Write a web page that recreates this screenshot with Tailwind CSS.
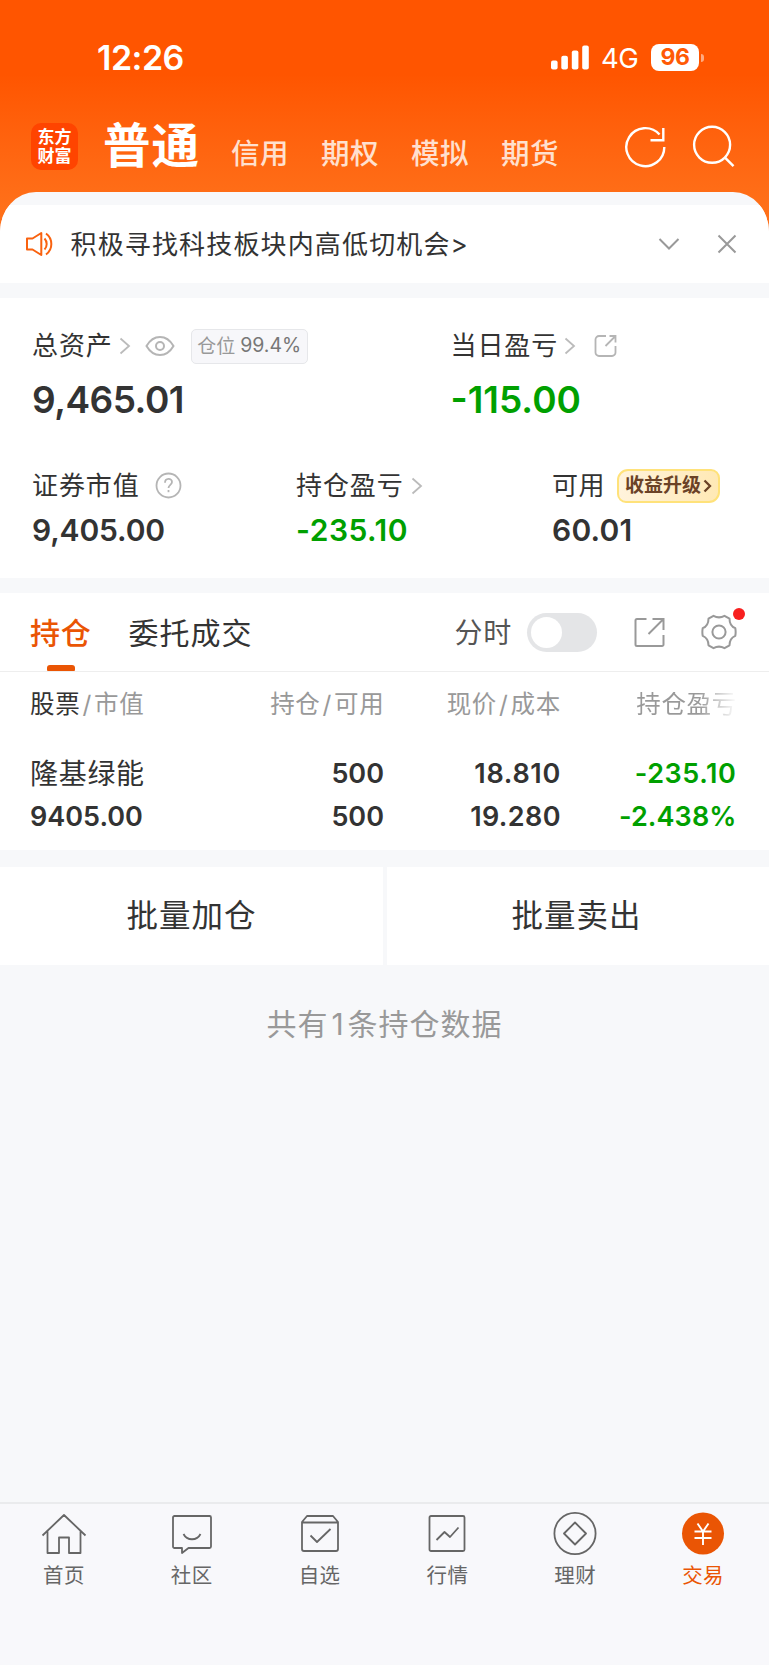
<!DOCTYPE html>
<html lang="zh-CN">
<head>
    <meta charset="UTF-8">
    <meta name="viewport" content="width=device-width, initial-scale=1.0">
    <title>交易</title>
    <script src="https://cdn.jsdelivr.net/npm/@tailwindcss/browser@4"></script>
</head>
<body class="font-['Inter','Noto_Sans_CJK_SC',sans-serif] text-[#333] bg-[#f7f8fa]">
<div class="flex flex-col w-[769px] h-[1665px] overflow-hidden leading-none whitespace-nowrap">
    <!-- header -->
    <header class="h-[232px] shrink-0 bg-linear-to-b from-[#ff5500] from-32% to-[#ff7019] to-90% text-white">
        <div class="flex items-center h-[115px] pl-[97px] pr-[65px]">
            <p class="text-[34px] font-semibold tracking-[-0.5px] mt-px">12:26</p>
            <svg class="ml-auto" width="38" height="25" viewBox="0 0 38 25" fill="#fff">
                <rect x="0" y="15.5" width="6.6" height="9" rx="2"/>
                <rect x="10.3" y="10.8" width="6.6" height="13.7" rx="2"/>
                <rect x="20.8" y="5.6" width="6.6" height="18.9" rx="2"/>
                <rect x="31.2" y="0.5" width="6.6" height="24" rx="2"/>
            </svg>
            <p class="ml-3 w-[38px] text-[27.5px] tracking-[-0.6px] mt-0.5">4G</p>
            <div class="ml-[12px] flex items-center justify-center w-[48px] h-[27px] rounded-[8px] bg-white text-[#ff5a05] text-[23px] font-bold tracking-[-0.5px]">96</div>
            <div class="ml-[2px] w-[3px] h-[8px] rounded-r-full bg-white/50"></div>
        </div>
        <div class="flex h-[77px] pl-[31px]">
            <div class="mt-2 w-[47px] h-[47px] rounded-[10px] bg-[#ff4400] flex flex-col items-center justify-center gap-[2px] text-[17px] font-bold">
                <p>东方</p>
                <p>财富</p>
            </div>
            <p class="ml-[25px] mt-[7px] w-[98px] text-[47.5px] font-bold tracking-[1px]">普通</p>
            <div class="flex ml-[30px] mt-[25px] text-[28.5px] font-medium tracking-[0.5px] text-[#ffe0cf]">
                <p class="w-[90px]">信用</p>
                <p class="w-[90px]">期权</p>
                <p class="w-[90px]">模拟</p>
                <p class="w-[90px]">期货</p>
            </div>
            <svg class="ml-[32px] mt-[9px]" width="44" height="46" viewBox="0 0 44 46" fill="none" stroke="#fff" stroke-width="2.4">
                <path d="M41.300 23A19 19 0 1 1 36.500 10.500"/>
                <path d="M40.300 4v12.300H27.500"/>
            </svg>
            <svg class="ml-[24px] mt-[9px]" width="44" height="46" viewBox="0 0 44 46" fill="none" stroke="#fff" stroke-width="2.4">
                <circle cx="21.1" cy="20.8" r="18"/>
                <path d="M33.5 33.2l9 9"/>
            </svg>
        </div>
    </header>

    <!-- notice -->
    <section class="relative -mt-10 shrink-0 h-[91px] rounded-t-[36px_40px] pt-[13px] bg-[#f7f8fa] overflow-hidden">
        <div class="h-[78px] bg-white flex items-center">
            <svg class="ml-[25px]" width="29" height="26" viewBox="0 0 29 26" fill="none" stroke="#f9620f" stroke-width="2">
                <path d="M2 7.5h5.500L16.300 2v22L7.500 18.500H2z" stroke-linejoin="round"/>
                <path d="M19.500 7.500a8 8 0 0 1 0 11M21 2.500a13 13 0 0 1 0 21"/>
            </svg>
            <p class="ml-[16.500px] mt-px text-[26px] tracking-[1.150px]">积极寻找科技板块内高低切机会&gt;</p>
            <svg class="ml-auto" width="22" height="14" viewBox="0 0 22 14" fill="none" stroke="#999" stroke-width="2"><path d="M1.500 2l9.500 9.500L20.500 2"/></svg>
            <svg class="ml-[37px] mr-[32px]" width="20" height="20" viewBox="0 0 20 20" fill="none" stroke="#999" stroke-width="2"><path d="M1.500 1.500l17 17M18.500 1.500l-17 17"/></svg>
        </div>
    </section>

    <!-- assets -->
    <section class="mt-[15px] shrink-0 h-[280px] bg-white pt-[31px]">
        <div class="flex">
            <div class="w-[419.500px] pl-[32px]">
                <div class="flex items-center h-[34px]">
                    <p class="text-[26px] tracking-[0.900px]">总资产</p>
                    <svg class="ml-[6px]" width="12" height="18" viewBox="0 0 12 18" fill="none" stroke="#bbb" stroke-width="1.800"><path d="M1.500 1.500L10 9l-8.500 7.500"/></svg>
                    <svg class="ml-[14px]" width="30" height="22" viewBox="0 0 30 22" fill="none" stroke="#b5b5b5" stroke-width="2">
                        <path d="M1.500 11C5 5 9.500 2 15 2s10 3 13.500 9C25 17 20.500 20 15 20S5 17 1.500 11z"/>
                        <circle cx="15" cy="11" r="4"/>
                    </svg>
                    <div class="ml-[16px] w-[117px] h-[35px] border-[1.500px] border-[#e6e7ea] rounded-[5px] bg-[#f7f7fa] flex items-center justify-center text-[19px] text-[#999]">仓位<span class="ml-[5px] text-[#777] text-[19.500px]">99.4%</span></div>
                </div>
                <p class="mt-[18px] text-[37px] font-semibold tracking-[-0.500px]">9,465.01</p>
            </div>
            <div class="pl-[31px]">
                <div class="flex items-center h-[34px]">
                    <p class="text-[26px] tracking-[0.900px]">当日盈亏</p>
                    <svg class="ml-[6px]" width="12" height="18" viewBox="0 0 12 18" fill="none" stroke="#bbb" stroke-width="1.800"><path d="M1.500 1.500L10 9l-8.500 7.500"/></svg>
                    <svg class="ml-[18px]" width="24" height="24" viewBox="0 0 24 24" fill="none" stroke="#b5b5b5" stroke-width="1.800">
                        <path d="M12 2H5a3.500 3.500 0 0 0-3.500 3.500v13A3.500 3.500 0 0 0 5 22h13a3.500 3.500 0 0 0 3.500-3.500V12"/>
                        <path d="M15.500 2h6v6.500M21 2.500L11.500 12"/>
                    </svg>
                </div>
                <p class="mt-[18px] text-[37px] font-semibold tracking-[0px] text-[#00a000]">-115.00</p>
            </div>
        </div>
        <div class="flex mt-[50px]">
            <div class="w-[264px] pl-[32px]">
                <div class="flex items-center h-[35px]">
                    <p class="text-[26px] tracking-[0.900px]">证券市值</p>
                    <svg class="ml-[15px]" width="27" height="27" viewBox="0 0 27 27" fill="none" stroke="#b5b5b5" stroke-width="1.800">
                        <circle cx="13.500" cy="13.500" r="12"/>
                        <path d="M10 10.800c0-5 7-5 7-.8 0 2.800-3.500 3-3.500 6"/><path d="M13.500 18v2.200"/>
                    </svg>
                </div>
                <p class="mt-[12px] text-[30px] font-semibold tracking-[-0.150px]">9,405.00</p>
            </div>
            <div class="w-[256px] pl-[32px]">
                <div class="flex items-center h-[35px]">
                    <p class="text-[26px] tracking-[0.900px]">持仓盈亏</p>
                    <svg class="ml-[7px]" width="12" height="18" viewBox="0 0 12 18" fill="none" stroke="#bbb" stroke-width="1.800"><path d="M1.500 1.500L10 9l-8.500 7.500"/></svg>
                </div>
                <p class="mt-[12px] text-[30px] font-semibold tracking-[0.500px] text-[#00a000]">-235.10</p>
            </div>
            <div class="pl-[32px]">
                <div class="flex items-center h-[35px]">
                    <p class="text-[26px] tracking-[0.500px]">可用</p>
                    <div class="ml-[12px] w-[103px] h-[34px] rounded-[9px] rounded-tl-[11px] rounded-br-[11px] border-2 border-[#ffe27a] bg-linear-to-r from-[#fff3dc] to-[#ffe9b5] flex items-center justify-center text-[#6b4226] text-[19px] font-bold">
                        收益升级
                        <svg class="ml-[2px]" width="9" height="14" viewBox="0 0 9 14" fill="none" stroke="#6b4226" stroke-width="2.300"><path d="M1.500 1.500L7 7l-5.500 5.500"/></svg>
                    </div>
                </div>
                <p class="mt-[12px] text-[30px] font-semibold tracking-[0.200px]">60.01</p>
            </div>
        </div>
    </section>

    <!-- positions -->
    <section class="mt-[15px] shrink-0 h-[257px] bg-white">
        <div class="flex items-center h-[79px] border-b border-[#eeeeee] pl-[30px] pr-[32px]">
            <div class="relative h-full pt-[2px] flex items-center text-[#ea5504] text-[30px] font-medium tracking-[0.800px]">
                持仓
                <div class="absolute left-[17px] bottom-0 w-[28px] h-[6px] rounded-t-[3px] rounded-b-[1px] bg-[#ea5504]"></div>
            </div>
            <p class="ml-[37px] mt-[2px] text-[30px] tracking-[1px]">委托成交</p>
            <p class="ml-auto mt-[2px] text-[28px] tracking-[0.700px] text-[#555]">分时</p>
            <div class="ml-[15px] w-[70px] h-[39px] rounded-full bg-[#e4e5e7] p-[4px]">
                <div class="w-[31px] h-[31px] rounded-full bg-white"></div>
            </div>
            <svg class="ml-[37px]" width="31" height="31" viewBox="0 0 31 31" fill="none" stroke="#999" stroke-width="2">
                <path d="M12.500 2H3a1.500 1.500 0 0 0-1.500 1.500v24A1.500 1.500 0 0 0 3 29h25a1.500 1.500 0 0 0 1.500-1.500V18"/>
                <path d="M18.500 2h11v11M29 2.500L14.500 17"/>
            </svg>
            <div class="relative ml-[36px]">
                <svg width="36" height="36" viewBox="0 0 36 36" fill="none" stroke="#999" stroke-width="2" stroke-linejoin="round">
                    <path d="M12.500 1.800c3.500 2 7.500 2 11 0l5 2.900c0 5 1.500 7.700 5.800 9.500q.7 3.800 0 7.600c-4.300 1.800-5.800 4.500-5.800 9.500l-5 2.900c-3.500-2-7.500-2-11 0l-5-2.900c0-5-1.500-7.700-5.800-9.500q-.7-3.800 0-7.600c4.300-1.800 5.800-4.500 5.800-9.500z"/>
                    <circle cx="18" cy="18" r="6.600"/>
                </svg>
                <div class="absolute -top-[6px] -right-[8px] w-[12px] h-[12px] rounded-full bg-[#f8201f]"></div>
            </div>
        </div>
        <div class="flex items-center h-[64px] pl-[30px] text-[24.500px] tracking-[0.700px] text-[#999]">
            <p class="w-[192px]"><span class="text-[#333]">股票</span><span class="mx-[2px]">/</span>市值</p>
            <p class="w-[162.500px] text-right">持仓<span class="mx-[2px]">/</span>可用</p>
            <p class="w-[176.500px] text-right">现价<span class="mx-[2px]">/</span>成本</p>
            <p class="w-[176px] text-right text-transparent bg-clip-text bg-linear-to-r from-[#999] from-78% to-white">持仓盈亏</p>
        </div>
        <div class="flex pl-[30px] pt-[24px] text-[27px] font-semibold">
            <div class="w-[192px]">
                <p class="font-normal text-[28px] h-[27px] tracking-[0.700px]">隆基绿能</p>
                <p class="mt-[16px]">9405.00</p>
            </div>
            <div class="w-[162px] text-right">
                <p>500</p>
                <p class="mt-[16px]">500</p>
            </div>
            <div class="w-[177px] text-right">
                <p class="tracking-[0.700px]">18.810</p>
                <p class="mt-[16px] tracking-[0.400px]">19.280</p>
            </div>
            <div class="w-[175.500px] text-right text-[#00a000]">
                <p class="tracking-[0.600px]">-235.10</p>
                <p class="mt-[16px] tracking-[0.100px]">-2.438%</p>
            </div>
        </div>
    </section>

    <!-- batch buttons -->
    <section class="mt-[17px] shrink-0 h-[98px] flex gap-[4px] text-[31.500px] tracking-[1px]">
        <div class="w-[383px] bg-white flex items-center justify-center">批量加仓</div>
        <div class="flex-1 bg-white flex items-center justify-center pr-[3px]">批量卖出</div>
    </section>
    <p class="mt-[44px] text-center text-[30px] tracking-[1px] text-[#999]">共有<span class="mx-[3px]">1</span>条持仓数据</p>

    <!-- tab bar -->
    <nav class="mt-auto shrink-0 h-[163px] border-t-2 border-[#eaebed] bg-[#f8f8fb] grid grid-cols-6 pr-[2px] text-[20.500px] tracking-[0.400px] text-[#666]">
        <div class="flex flex-col items-center pt-[8px] gap-[10px]">
            <svg width="46" height="44" viewBox="0 0 46 44" fill="none" stroke="#666" stroke-width="1.800" stroke-linejoin="round">
                <path d="M1.500 23.500L23 3l21.500 20.500M6.500 19.500V41H18V25.500h10V41h11.500V19.500"/>
            </svg>
            <p>首页</p>
        </div>
        <div class="flex flex-col items-center pt-[8px] gap-[10px]">
            <svg width="46" height="44" viewBox="0 0 46 44" fill="none" stroke="#666" stroke-width="1.800" stroke-linejoin="round">
                <path d="M5.500 4h35A1.500 1.500 0 0 1 42 5.500v29a1.500 1.500 0 0 1-1.500 1.500H19.500l-6.500 5v-5H5.500A1.500 1.500 0 0 1 4 34.500v-29A1.500 1.500 0 0 1 5.500 4z"/>
                <path d="M14.500 22c3.500 7 13.500 7 17 0"/>
            </svg>
            <p>社区</p>
        </div>
        <div class="flex flex-col items-center pt-[8px] gap-[10px]">
            <svg width="46" height="44" viewBox="0 0 46 44" fill="none" stroke="#666" stroke-width="1.800" stroke-linejoin="round">
                <path d="M5 10v27A2 2 0 0 0 7 39h32a2 2 0 0 0 2-2V10L36 4H10zM5 10.500h36"/>
                <path d="M13.500 23.500l6.500 6.500L33.500 17"/>
            </svg>
            <p>自选</p>
        </div>
        <div class="flex flex-col items-center pt-[8px] gap-[10px]">
            <svg width="46" height="44" viewBox="0 0 46 44" fill="none" stroke="#666" stroke-width="1.800" stroke-linejoin="round">
                <rect x="5.500" y="4" width="35" height="35" rx="1.500"/>
                <path d="M12.500 28l8-8 5.500 5L34.500 15.500"/>
            </svg>
            <p>行情</p>
        </div>
        <div class="flex flex-col items-center pt-[8px] gap-[10px]">
            <svg width="46" height="44" viewBox="0 0 46 44" fill="none" stroke="#666" stroke-width="1.800" stroke-linejoin="round">
                <circle cx="23" cy="21.500" r="20.600"/>
                <path d="M23 10.500l11 11-11 11-11-11z"/>
            </svg>
            <p>理财</p>
        </div>
        <div class="flex flex-col items-center pt-[8px] gap-[10px] text-[#ea5504]">
            <svg width="46" height="44" viewBox="0 0 46 44" fill="none" stroke="#fff" stroke-width="1.900">
                <circle cx="23" cy="21.500" r="21" fill="#ea5504" stroke="none"/>
                <path d="M17.500 11.500l5.500 8 5.500-8M23 19.500V33M14.500 19.500h17M14.500 26h17"/>
            </svg>
            <p>交易</p>
        </div>
    </nav>
</div>
</body>
</html>
